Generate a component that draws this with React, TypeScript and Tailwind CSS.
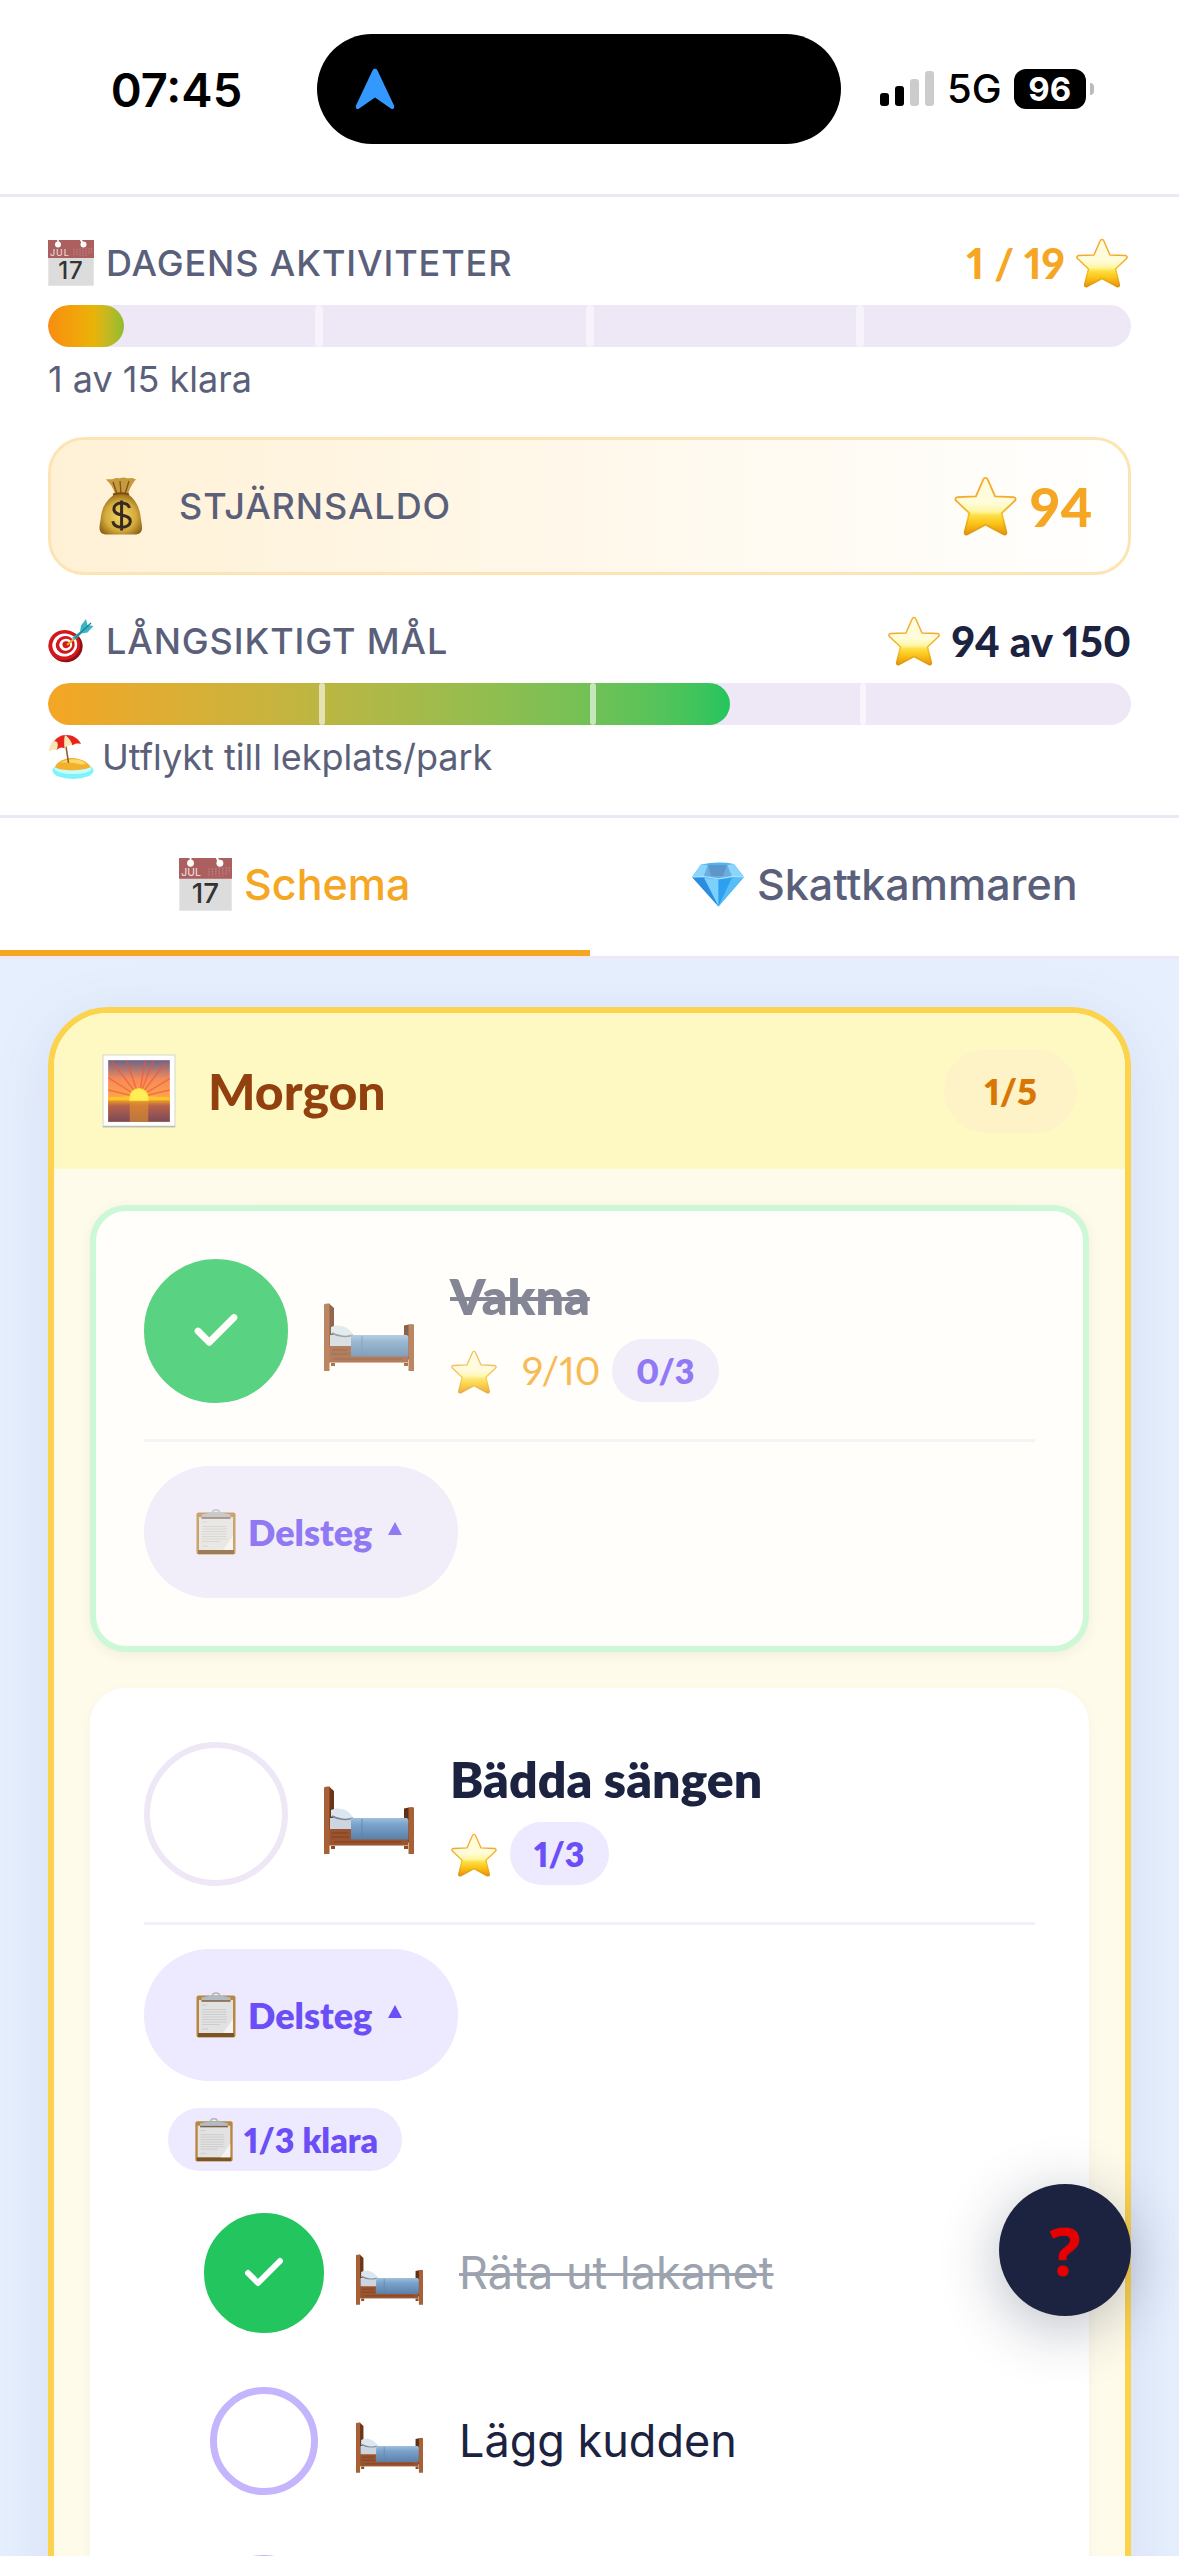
import { useState } from "react";
import type { ReactNode } from "react";
import { Check } from "lucide-react";

type IconProps = { className?: string };

interface Step {
  id: string;
  name: string;
  done: boolean;
}

interface Task {
  id: string;
  name: string;
  done: boolean;
  streak?: string;
  count: string;
  steps: Step[];
}

const initialTasks: Task[] = [
  { id: "vakna", name: "Vakna", done: true, streak: "9/10", count: "0/3", steps: [] },
  {
    id: "badda",
    name: "Bädda sängen",
    done: false,
    count: "1/3",
    steps: [
      { id: "lakan", name: "Räta ut lakanet", done: true },
      { id: "kudde", name: "Lägg kudden", done: false },
      { id: "ny", name: "", done: false },
    ],
  },
];

/* ---------- icons ---------- */

function StarIcon({ className }: IconProps) {
  return (
    <svg viewBox="0 0 52 50" className={className} aria-hidden="true">
      <defs>
        <linearGradient id="starFill" x1="0" y1="0" x2="0" y2="1">
          <stop offset="0" stopColor="#fffbe0" />
          <stop offset="0.45" stopColor="#fffcd8" />
          <stop offset="0.6" stopColor="#fef5a0" />
          <stop offset="0.66" stopColor="#fde047" />
          <stop offset="0.8" stopColor="#fcc419" />
          <stop offset="1" stopColor="#e8920c" />
        </linearGradient>
        <linearGradient id="starEdge" x1="0" y1="0" x2="0" y2="1">
          <stop offset="0" stopColor="#f7ae2c" />
          <stop offset="0.4" stopColor="#f0a92f" />
          <stop offset="0.7" stopColor="#f6c21c" />
          <stop offset="1" stopColor="#d9920f" />
        </linearGradient>
      </defs>
      <path
        d="M26 1.500c.9 0 1.600.6 1.900 1.500L34 17l15.200.6c1.900.1 2.500 2 1.100 3.200L39.500 31l3.800 15.500c.5 1.800-1 2.900-2.600 1.900L26 40.500l-14.700 7.900c-1.600 1-3.100-.1-2.600-1.900L12.500 31 1.700 20.800c-1.400-1.200-.8-3.100 1.100-3.200L18 17 24.100 3c.3-.9 1-1.500 1.900-1.500z"
        fill="url(#starFill)"
        stroke="url(#starEdge)"
        strokeWidth="1.500"
        strokeLinejoin="round"
      />
    </svg>
  );
}

function CalendarIcon({ className }: IconProps) {
  return (
    <svg viewBox="0 0 46 46" className={className} aria-hidden="true">
      <rect x="0.5" y="0.5" width="45" height="45" fill="#dcdcdc" stroke="#e6e6e6" />
      <rect width="46" height="18" fill="#ab5f5e" />
      <circle cx="10" cy="4.500" r="3" fill="#fff" />
      <path d="M9.200 0h1.600v4H9.200zM32 0h2l2 4-2 1z" fill="#fff" />
      <circle cx="35.500" cy="4.500" r="3" fill="#fff" />
      <text x="2" y="16" fontSize="9" fill="#ead7d7" fontFamily="Inter, sans-serif">JUL</text>
      <path d="M26 9v7M29 9v7M32 8.500v7.500M35 8v8M38 8v8M41 8v6M43.500 8v5" stroke="#bf8483" strokeWidth="1" strokeDasharray="1.500 .8" />
      <text x="23" y="39" fontSize="24" textAnchor="middle" fill="#333" fontFamily="Inter, sans-serif">17</text>
    </svg>
  );
}

function MoneyBagIcon({ className }: IconProps) {
  return (
    <svg viewBox="0 0 44 58" className={className} aria-hidden="true">
      <defs>
        <radialGradient id="bagFill" cx="0.5" cy="0.55" r="0.6">
          <stop offset="0" stopColor="#f3d869" />
          <stop offset="0.6" stopColor="#d4ab3c" />
          <stop offset="1" stopColor="#8d5f14" />
        </radialGradient>
      </defs>
      <path d="M7 2.500c3-1 5 .5 7-.5s4-1 6-.8 4-1 6-.5 4 .8 6 .3 3 1 5 1.300c-3 3.500-6 8-8 14.700H16C14.500 11 11 6 7 2.500z" fill="#c79a3e" />
      <path d="M14 5l4 12M21 4l1 13M30 4l-4 13" stroke="#7d5417" strokeWidth="1.300" fill="none" />
      <path d="M16 17h13c7 5 11.500 13 12.500 22 .6 5 1.500 8 1.500 12 0 4.500-3 6.500-7 6.500H8c-4.500 0-7.500-2-7.500-6.500 0-4 1-7 1.500-12 1-9 6.500-17 14-22z" fill="url(#bagFill)" />
      <path d="M14 17.500c5-1.500 12-1.500 16 0" stroke="#7a4d17" strokeWidth="2" fill="none" />
      <path d="M30.500 31c-.8-3.300-3.800-5-8-5-4.500 0-7.600 2.200-7.600 6 0 8.500 16.400 4 16.400 12 0 4-3.600 6.200-8.500 6.200-5 0-8.300-2-9-6M22.600 23.500v30" stroke="#372a20" strokeWidth="3" fill="none" />
    </svg>
  );
}

function TargetIcon({ className }: IconProps) {
  return (
    <svg viewBox="0 0 46 46" className={className} aria-hidden="true">
      <g transform="rotate(-14 17 28)">
        <ellipse cx="18" cy="29" rx="16.500" ry="15.500" fill="#8e1013" />
        <ellipse cx="16.500" cy="27" rx="16" ry="15" fill="#d3171c" />
        <ellipse cx="17" cy="27" rx="12.500" ry="11.500" fill="#fff" />
        <ellipse cx="17.500" cy="27" rx="9.500" ry="8.800" fill="#d3171c" />
        <ellipse cx="18" cy="27" rx="6.500" ry="6" fill="#fff" />
        <ellipse cx="18.500" cy="27" rx="3.800" ry="3.400" fill="#d3171c" />
      </g>
      <path d="M19 27l7-6" stroke="#e6b422" strokeWidth="2" />
      <path d="M24 20l8-6.500 1-6 5-6.500 1.500 6L45.500 8l-6 6.500-6 1L27 22z" fill="#3cb6c4" />
      <path d="M27 20L43 5" stroke="#1c7f92" strokeWidth="1.200" />
    </svg>
  );
}

function BeachIcon({ className }: IconProps) {
  return (
    <svg viewBox="0 0 46 46" className={className} aria-hidden="true">
      <ellipse cx="25" cy="36.500" rx="20.500" ry="8.500" fill="#7ff3fa" />
      <ellipse cx="25" cy="34.500" rx="18.500" ry="5.500" fill="#c8fbfb" />
      <path d="M7 33c2-5 9-9 17-9s16 4 18.500 9c-5 4-31 4.500-35.500 0z" fill="#f3b02b" />
      <path d="M12 29c6-4 20-6 26 1-5 2-12-3-26-1z" fill="#fbd968" />
      <path d="M17.500 9l3 20" stroke="#8c5a33" strokeWidth="1.600" />
      <path d="M1 17.500C1 9 8 1.500 17 1c7-.4 14 3.500 16 9-4-1-6-.5-8.500 1.500-3-.8-5.500 0-8 2.800-3-1.300-5.500-.8-8 2C6 15.300 3 15.800 1 17.500z" fill="#f6e6b4" />
      <path d="M17 1c-4.500.4-8 2.500-11 6.500 3-1 5.500 2 2.500 8.800 2.500-2.800 5-3.300 8-2C16 9 16 4 17 1zM17 1c3 2 6.500 6 7.500 10.500 2.500-2 4.500-2.500 8.500-1.500C30.500 4 24 .6 17 1z" fill="#e8231d" />
    </svg>
  );
}

function DiamondIcon({ className }: IconProps) {
  return (
    <svg viewBox="0 0 54 46" className={className} aria-hidden="true">
      <path d="M10 3.500Q27 0 43 3L53 16 27.500 45.500 1 16z" fill="#4db4f5" />
      <path d="M10 3.500L17 4l-4 11L1 16zM43 3l-7 1 5 11.500 12 .5z" fill="#8bd5fb" />
      <path d="M17 4h19l5 11.500-13.500 1.500L13 15z" fill="#6aaee0" />
      <path d="M17 4h19l-4 11H20z" fill="#5d97c9" />
      <path d="M13 17l14.500 1.500V45.500z" fill="#7cd1fc" />
      <path d="M41 17l-13.500 1.500V45.500z" fill="#2fa0f0" />
      <path d="M1 16l12 1 14.500 28.500z" fill="#2b8ce0" />
      <path d="M53 16l-12 1-13.500 28.500z" fill="#56bdf8" />
      <path d="M1 16l12-.5 14.500 2.300L41 15.500l12 .5" stroke="#b7e7fd" strokeWidth="1" fill="none" />
    </svg>
  );
}

function SunriseIcon({ className }: IconProps) {
  return (
    <svg viewBox="0 0 72 72" className={className} aria-hidden="true">
      <defs>
        <linearGradient id="dawnSky" x1="0" y1="0" x2="0" y2="1">
          <stop offset="0" stopColor="#6a6488" />
          <stop offset="0.3" stopColor="#f58a5a" />
          <stop offset="0.65" stopColor="#ffa845" />
          <stop offset="1" stopColor="#fbc02d" />
        </linearGradient>
        <linearGradient id="dawnSea" x1="0" y1="0" x2="0" y2="1">
          <stop offset="0" stopColor="#eda024" />
          <stop offset="0.25" stopColor="#b8624a" />
          <stop offset="1" stopColor="#7b4a58" />
        </linearGradient>
      </defs>
      <rect x="1" y="1" width="70" height="70" fill="#fff" stroke="#d5d9cc" />
      <path d="M1 70.500h70" stroke="#b9bfae" strokeWidth="1.500" />
      <rect x="6" y="6" width="60" height="60" fill="url(#dawnSky)" />
      <g stroke="#f0543c" strokeWidth="1.500" opacity="0.6">
        <path d="M36 42L6 35M36 42L6 23M36 42L9 6M36 42L24 6M36 42L42 6M36 42L50 6M36 42L62 8M36 42l30-18M36 42l30-7" />
      </g>
      <path d="M6 43c6-3 10 0 16-2h28c5 2 10-1 16 2v3H6z" fill="#fbc52f" />
      <rect x="6" y="45" width="60" height="21" fill="url(#dawnSea)" />
      <path d="M27 45.500v-3a9 9 0 0 1 18 0v3z" fill="#ffee58" stroke="#ffd93b" />
      <rect x="27" y="46" width="18" height="20" fill="#e8952a" opacity="0.6" />
    </svg>
  );
}

function BedIcon({ className }: IconProps) {
  return (
    <svg viewBox="0 0 90 68" className={className} aria-hidden="true">
      <defs>
        <linearGradient id="blanket" x1="0" y1="0" x2="0" y2="1">
          <stop offset="0" stopColor="#9fc0df" />
          <stop offset="0.3" stopColor="#7ba3cb" />
          <stop offset="1" stopColor="#5a80aa" />
        </linearGradient>
      </defs>
      <path d="M5 .5l5 4.500v40H5z" fill="#6b3519" />
      <path d="M80 22.500l5-1v35h-5z" fill="#5f2f18" />
      <path d="M7 59h4v4H7zM80 59h4v4h-4z" fill="#8a4c28" />
      <path d="M6 32h22v12H6z" fill="#cdd6e0" />
      <path d="M7 24c6-3.500 18-1.500 22 8-5 2.500-15 2-22-1.500z" fill="#dbe6f0" />
      <path d="M8 30c6 3.500 15 4.500 21 2" stroke="#7b8794" strokeWidth="1.500" fill="none" />
      <path d="M5 43h23v10h56v6H5z" fill="#9a5530" />
      <path d="M8 47h16M7 51h18M10 56h68" stroke="#7c4123" strokeWidth="1" />
      <path d="M5 59.500h79" stroke="#c9a287" strokeWidth="1" />
      <path d="M27 32h56l1.500 2v19.500H27z" fill="url(#blanket)" />
      <path d="M38 33v20" stroke="#5c83ae" strokeWidth="0.800" />
      <path d="M0 1.500Q2 0 5.500.5V68H0z" fill="#a86036" />
      <path d="M84.500 21.500q3-1 5.500 0V68h-5.500z" fill="#a86036" />
    </svg>
  );
}

function ClipboardIcon({ className }: IconProps) {
  return (
    <svg viewBox="0 0 40 46" className={className} aria-hidden="true">
      <rect x="0.500" y="3.500" width="39" height="42" rx="2" fill="#b9883f" />
      <path d="M2 41h36v4H2z" fill="#7b5426" />
      <path d="M3 8h34v33H3z" fill="#e2e2e2" />
      <path d="M27 41h10V27z" fill="#f4f4f4" />
      <path d="M6 13h5M6 17.500h24M6 20h25M6 22.500h24M6 25h25M6 27.500h24M6 30h25M6 32.500h18M6 37h6" stroke="#cccccc" strokeWidth="1" />
      <path d="M5.500 9V5.500L13 4h14l7.500 1.500V9z" fill="#b3bac1" />
      <path d="M5.500 9h29" stroke="#7c6048" strokeWidth="1.500" />
      <path d="M16 5c0-5.500 8-5.500 8 0" stroke="#a9b7c4" strokeWidth="1.500" fill="none" />
    </svg>
  );
}

/* ---------- pieces ---------- */

function StatusBar() {
  return (
    <div className="grid h-[194px] shrink-0 grid-cols-[317fr_524fr_338fr] items-start bg-white pt-[34px]">
      <div className="flex h-[110px] items-center justify-center pl-9 font-[Inter,sans-serif] text-[47px] leading-none font-semibold text-black">
        07:45
      </div>
      <div className="flex h-[110px] items-center rounded-full bg-black pl-[38px]">
        <svg viewBox="0 0 40 42" className="h-[42px] w-10" aria-hidden="true">
          <path d="M17.500 2.500c.8-2.500 4.200-2.500 5 0L39 37.500c.9 2.700-1.300 4.800-3.500 2.700L20 29.500 4.500 40.200C2.300 42.300.1 40.200 1 37.500z" fill="#3399ff" />
        </svg>
      </div>
      <div className="flex h-[110px] items-center gap-3 pl-[38px] text-black">
        <svg viewBox="0 0 56 36" className="h-9 w-14" aria-hidden="true">
          <rect x="1" y="22" width="9" height="13" rx="3" />
          <rect x="16" y="15" width="9" height="20" rx="3" />
          <rect x="31" y="8" width="9" height="27" rx="3" fill="#cccccc" />
          <rect x="46" y="0" width="9" height="35" rx="3" fill="#cccccc" />
        </svg>
        <span className="font-[Inter,sans-serif] text-[40px] leading-none font-medium">5G</span>
        <div className="flex items-center gap-1">
          <span className="flex h-10 w-[72px] items-center justify-center rounded-xl bg-black font-[Inter,sans-serif] text-[33px] leading-none font-bold text-white">
            96
          </span>
          <span className="h-3 w-1 rounded-r-full bg-[#bbbbbb]" />
        </div>
      </div>
    </div>
  );
}

function SectionLabel({ icon, children }: { icon: ReactNode; children: ReactNode }) {
  return (
    <h2 className="flex items-center gap-3 text-[36px] font-medium tracking-wide text-[#5b607a] uppercase">
      {icon}
      {children}
    </h2>
  );
}

function Pill({ children }: { children: ReactNode }) {
  return (
    <span className="flex h-[63px] items-center gap-2 rounded-full bg-[#ede9fe] px-6 font-[Lato,sans-serif] text-[34px] font-extrabold text-[#6b4ef6] proportional-nums">
      {children}
    </span>
  );
}

function TaskCard({ task, onToggle, onToggleStep }: {
  task: Task;
  onToggle: () => void;
  onToggleStep: (stepId: string) => void;
}) {
  const doneSteps = task.steps.filter((s) => s.done).length;

  return (
    <li className={`rounded-[36px] border-6 bg-white bg-clip-padding p-12 ${task.done ? "border-[#bbf7d0] opacity-75 shadow-[0_3px_12px_rgba(28,35,64,0.08)]" : "border-white shadow-[0_3px_12px_rgba(28,35,64,0.04)]"}`}>
      <label className="flex items-center gap-9 pb-9">
        <span className="grid shrink-0 place-items-center">
          <input
            type="checkbox"
            checked={task.done}
            onChange={onToggle}
            className="col-start-1 row-start-1 size-36 appearance-none rounded-full border-6 border-[#ede7f6] bg-white checked:border-[#22c55e] checked:bg-[#22c55e]"
          />
          {task.done && <Check size={54} strokeWidth={3} className="col-start-1 row-start-1 text-white" />}
        </span>
        <BedIcon className="mt-3 h-[68px] w-[90px] shrink-0" />
        <span className="flex flex-col gap-2">
          <span className={`font-[Lato,sans-serif] text-[50px] leading-[70px] font-extrabold ${task.done ? "text-[#5b607a] line-through decoration-4" : "text-[#1c2340]"}`}>
            {task.name}
          </span>
          <span className="flex items-center gap-3">
            <StarIcon className="mt-1 h-11 w-12" />
            {task.streak && <span className="pl-3 font-[Lato,sans-serif] text-[39px] leading-none text-[#f5a623] proportional-nums">{task.streak}</span>}
            <Pill>{task.count}</Pill>
          </span>
        </span>
      </label>

      <div className="border-t-3 border-[#f3f0fa] pt-6">
        <button type="button" className="flex h-[132px] items-center gap-2 rounded-full bg-[#ede9fe] px-12 font-[Lato,sans-serif] text-[36px] font-extrabold text-[#6b4ef6]">
          <ClipboardIcon className="h-[46px] w-12" />
          Delsteg
          <svg viewBox="0 0 14 13" className="mx-2 mb-2 h-[13px] w-3.5" fill="currentColor" aria-hidden="true">
            <path d="M7 0l7 13H0z" />
          </svg>
        </button>

        {task.steps.length > 0 && (
          <>
            <div className="mt-[27px] ml-6 flex">
              <Pill>
                <ClipboardIcon className="h-11 w-11" />
                {doneSteps}/{task.steps.length} klara
              </Pill>
            </div>
            <ul className="mt-[30px] flex flex-col gap-6 pl-15">
              {task.steps.map((step) => (
                <li key={step.id}>
                  <label className="flex h-36 items-center">
                    <span className="grid w-30 shrink-0 place-items-center">
                      <input
                        type="checkbox"
                        checked={step.done}
                        onChange={() => onToggleStep(step.id)}
                        className="col-start-1 row-start-1 size-27 appearance-none rounded-full border-7 border-[#c4b5fd] bg-white checked:size-30 checked:border-[#22c55e] checked:bg-[#22c55e]"
                      />
                      {step.done && <Check size={48} strokeWidth={3} className="col-start-1 row-start-1 text-white" />}
                    </span>
                    <BedIcon className="mt-3 ml-8 h-[51px] w-[67px] shrink-0" />
                    {step.name && (
                      <span className={`ml-9 text-[45px] ${step.done ? "text-[#9ca3af] line-through decoration-3" : "text-[#1c2340]"}`}>
                        {step.name}
                      </span>
                    )}
                  </label>
                </li>
              ))}
            </ul>
          </>
        )}
      </div>
    </li>
  );
}

export default function App() {
  const [tab, setTab] = useState<"schema" | "skatt">("schema");
  const [tasks, setTasks] = useState<Task[]>(initialTasks);

  const toggleTask = (id: string) =>
    setTasks((all) => all.map((t) => (t.id === id ? { ...t, done: !t.done } : t)));

  const toggleStep = (id: string, stepId: string) =>
    setTasks((all) => all.map((t) => (t.id === id
      ? { ...t, steps: t.steps.map((s) => (s.id === stepId ? { ...s, done: !s.done } : s)) }
      : t)));

  return (
    <div className="flex h-screen flex-col overflow-hidden bg-[#e6effd] font-[Inter,sans-serif]">
      <StatusBar />

      {/* Progress */}
      <header className="shrink-0 border-y-3 border-[#ede7f6] bg-white px-12 pt-9 pb-[30px]">
        <section>
          <div className="flex h-15 items-center justify-between">
            <SectionLabel icon={<CalendarIcon className="size-[46px]" />}>Dagens aktiviteter</SectionLabel>
            <p className="flex items-center gap-2 font-[Lato,sans-serif] text-[42px] font-black text-[#f5a623] proportional-nums">
              1 / 19 <StarIcon className="h-[50px] w-[58px]" />
            </p>
          </div>
          <div className="relative mt-3 h-[42px] overflow-hidden rounded-full bg-[#ede7f6]">
            <div className="h-full rounded-full bg-linear-to-r from-[#f98c10] via-[#eab308] via-60% to-[#8fbc2f]" style={{ width: "7%" }} />
            <span className="absolute inset-y-0 left-1/4 w-2 -translate-x-1/2 rounded-full bg-white/50" />
            <span className="absolute inset-y-0 left-1/2 w-2 -translate-x-1/2 rounded-full bg-white/50" />
            <span className="absolute inset-y-0 left-3/4 w-2 -translate-x-1/2 rounded-full bg-white/50" />
          </div>
          <p className="mt-1 text-[36px] leading-[56px] text-[#5b607a]">1 av 15 klara</p>
        </section>

        <section className="mt-[30px] flex h-[138px] items-center justify-between rounded-[36px] border-3 border-[#fde4b5] bg-linear-to-r from-[#fff1d6] to-white px-9">
          <h2 className="flex items-center gap-9 pl-3 text-[36px] font-medium tracking-wide text-[#5b607a] uppercase">
            <MoneyBagIcon className="h-[58px] w-11" />
            Stjärnsaldo
          </h2>
          <p className="flex items-center gap-3 font-[Lato,sans-serif] text-[54px] font-black text-[#f5a623]">
            <StarIcon className="h-15 w-[63px]" /> 94
          </p>
        </section>

        <section className="mt-9">
          <div className="flex h-15 items-center justify-between">
            <SectionLabel icon={<TargetIcon className="size-[46px]" />}>Långsiktigt mål</SectionLabel>
            <p className="flex items-center gap-2 font-[Lato,sans-serif] text-[42px] font-black text-[#1c2340] proportional-nums">
              <StarIcon className="h-[50px] w-[58px]" /> 94 av 150
            </p>
          </div>
          <div className="relative mt-3 h-[42px] overflow-hidden rounded-full bg-[#ede7f6]">
            <div className="h-full rounded-full bg-linear-to-r from-[#f5a623] to-[#22c55e]" style={{ width: `${Math.round((94 / 150) * 100)}%` }} />
            <span className="absolute inset-y-0 left-1/4 w-1.5 rounded-full bg-white/60" />
            <span className="absolute inset-y-0 left-1/2 w-1.5 rounded-full bg-white/60" />
            <span className="absolute inset-y-0 left-3/4 w-1.5 rounded-full bg-white/60" />
          </div>
          <p className="mt-1 flex items-center gap-2 text-[36px] leading-[56px] text-[#5b607a]">
            <BeachIcon className="size-[46px]" />
            Utflykt till lekplats/park
          </p>
        </section>
      </header>

      {/* Tabs */}
      <nav className="grid shrink-0 grid-cols-2 border-b-3 border-[#ede7f6] bg-white text-[43px] font-medium">
        <button
          type="button"
          onClick={() => setTab("schema")}
          className={`flex h-[138px] items-center justify-center gap-3 border-b-6 ${tab === "schema" ? "border-[#f5a623] text-[#f5a623]" : "border-white text-[#5b607a]"}`}
        >
          <CalendarIcon className="size-[53px]" />
          Schema
        </button>
        <button
          type="button"
          onClick={() => setTab("skatt")}
          className={`flex h-[138px] items-center justify-center gap-3 border-b-6 ${tab === "skatt" ? "border-[#f5a623] text-[#f5a623]" : "border-white text-[#5b607a]"}`}
        >
          <DiamondIcon className="h-[46px] w-[54px]" />
          Skattkammaren
        </button>
      </nav>

      <main className="min-h-0 flex-1 overflow-y-auto p-12 [scrollbar-width:none]">
        <section className="overflow-hidden rounded-[60px] border-6 border-[#fcd34d] bg-[#fffbeb] shadow-[0_12px_60px_rgba(90,100,160,0.12)]">
          <div className="flex items-center justify-between bg-[#fef9c3] px-12 py-9">
            <h2 className="flex items-center gap-8 font-[Lato,sans-serif] text-[50px] font-black text-[#92400e]">
              <SunriseIcon className="size-[74px]" />
              Morgon
            </h2>
            <span className="flex h-[84px] items-center rounded-full bg-[#fef3c7] px-10 font-[Lato,sans-serif] text-[36px] font-extrabold text-[#d97706] proportional-nums">
              1/5
            </span>
          </div>
          <ul className="flex flex-col gap-9 p-9">
            {tasks.map((t) => (
              <TaskCard key={t.id} task={t} onToggle={() => toggleTask(t.id)} onToggleStep={(s) => toggleStep(t.id, s)} />
            ))}
          </ul>
        </section>
      </main>

      <button
        type="button"
        aria-label="Hjälp"
        className="fixed right-12 bottom-60 flex size-33 items-center justify-center rounded-full bg-[#1c2340] font-['Noto_Sans',sans-serif] text-[66px] leading-none font-bold text-[#e60000] shadow-[0_12px_60px_rgba(28,35,64,0.3)]"
      >
        ?
      </button>
    </div>
  );
}
